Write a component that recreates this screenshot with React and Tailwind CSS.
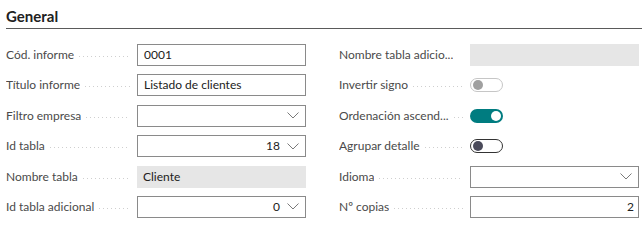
import React from 'react';

const Chevron = () => (
  <svg width="12" height="7" viewBox="0 0 12 7" className="shrink-0">
    <path d="M0.5 0.5 L6 6 L11.5 0.5" fill="none" stroke="#7a7a7a" strokeWidth="1" />
  </svg>
);

const Label = ({ text, dots = true }) => (
  <div className="flex items-center w-[131px] shrink-0 pr-[7px] min-w-0">
    <span className="whitespace-nowrap overflow-hidden text-[#4a4a4a]">{text}</span>
    {dots && (
      <span className="flex-1 ml-[5px] mt-[3px] h-px bg-[repeating-linear-gradient(to_right,#cfcfcf_0_1px,transparent_1px_4px)]" />
    )}
  </div>
);

const TextBox = ({ value = '', align = 'left', chevron = false, disabled = false }) => (
  <div
    className={
      'w-[169px] h-[22px] flex items-center gap-[7px] ' +
      (disabled ? 'bg-[#e6e6e6] pl-[6px]' : 'border border-[#8a8a8a] bg-white pl-[6px] pr-[4px]')
    }
  >
    <span className={'flex-1 whitespace-nowrap text-[#212121] ' + (align === 'right' ? 'text-right' : '')}>
      {value}
    </span>
    {chevron && <span className="mr-[2px] flex"><Chevron /></span>}
  </div>
);

const Toggle = ({ state }) => {
  if (state === 'on') {
    return (
      <div className="w-[33px] h-[14px] rounded-full bg-[#007c80] flex items-center justify-end pr-[2px]">
        <div className="w-[10px] h-[10px] rounded-full bg-white" />
      </div>
    );
  }
  if (state === 'disabled') {
    return (
      <div className="w-[33px] h-[14px] rounded-full border border-[#c6c6c6] flex items-center pl-[2px]">
        <div className="w-[10px] h-[10px] rounded-full bg-[#a0a0a0]" />
      </div>
    );
  }
  return (
    <div className="w-[33px] h-[14px] rounded-full border border-[#333] flex items-center pl-[2px]">
      <div className="w-[10px] h-[10px] rounded-full bg-[#4a4a5a]" />
    </div>
  );
};

const Row = ({ children }) => <div className="flex items-center h-[22px]">{children}</div>;

export default function App() {
  return (
    <div className="w-[642px] h-[230px] bg-white overflow-hidden font-['Lato',sans-serif] text-[12px]">
      <div className="pl-[6px] pt-[5px]">
        <div className="text-[15px] font-bold text-[#212121] leading-[22px] pb-[1px] border-b border-[#5a5a5a]">
          General
        </div>
      </div>
      <div className="grid grid-cols-[300px_303px] gap-x-[33px] pl-[6px] pt-[15px]">
        <div className="flex flex-col gap-y-[8.4px]">
          <Row><Label text="Cód. informe" /><TextBox value="0001" /></Row>
          <Row><Label text="Título informe" /><TextBox value="Listado de clientes" /></Row>
          <Row><Label text="Filtro empresa" /><TextBox chevron /></Row>
          <Row><Label text="Id tabla" /><TextBox value="18" align="right" chevron /></Row>
          <Row><Label text="Nombre tabla" /><TextBox value="Cliente" disabled /></Row>
          <Row><Label text="Id tabla adicional" /><TextBox value="0" align="right" chevron /></Row>
        </div>
        <div className="flex flex-col gap-y-[8.4px]">
          <Row><Label text="Nombre tabla adicio..." dots={false} /><TextBox disabled /></Row>
          <Row><Label text="Invertir signo" /><Toggle state="disabled" /></Row>
          <Row><Label text="Ordenación ascend..." /><Toggle state="on" /></Row>
          <Row><Label text="Agrupar detalle" /><Toggle state="off" /></Row>
          <Row><Label text="Idioma" /><TextBox chevron /></Row>
          <Row><Label text="Nº copias" /><TextBox value="2" align="right" /></Row>
        </div>
      </div>
    </div>
  );
}
